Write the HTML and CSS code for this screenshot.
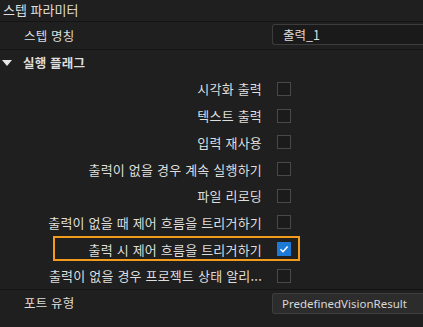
FILE: index.html
```html
<!DOCTYPE html>
<html lang="ko">
<head>
<meta charset="utf-8">
<title>스텝 파라미터</title>
<link rel="stylesheet" href="styles.css">
</head>
<body>
<div class="panel">
	<div class="title">스텝 파라미터</div>
	<div class="field">
		<span class="field_label">스텝 명칭</span>
		<div class="text_box">출력_1</div>
	</div>
	<div class="group_head">
		<span class="arrow"></span>
		<span class="group_label">실행 플래그</span>
	</div>
	<div class="flags">
		<div class="flag"><span class="flag_label">시각화 출력</span><span class="check"></span></div>
		<div class="flag"><span class="flag_label">텍스트 출력</span><span class="check"></span></div>
		<div class="flag"><span class="flag_label">입력 재사용</span><span class="check"></span></div>
		<div class="flag"><span class="flag_label">출력이 없을 경우 계속 실행하기</span><span class="check"></span></div>
		<div class="flag"><span class="flag_label">파일 리로딩</span><span class="check"></span></div>
		<div class="flag"><span class="flag_label">출력이 없을 때 제어 흐름을 트리거하기</span><span class="check"></span></div>
		<div class="flag flag_marked"><span class="flag_label">출력 시 제어 흐름을 트리거하기</span><span class="check checked">
			<svg width="14" height="14" viewBox="0 0 14 14"><path d="M3.5 7.3 L6 9.7 L10.6 4.4" fill="none" stroke="#fff" stroke-width="1.5"/></svg>
		</span></div>
		<div class="flag"><span class="flag_label">출력이 없을 경우 프로젝트 상태 알리...</span><span class="check"></span></div>
	</div>
	<div class="field field_port">
		<span class="field_label">포트 유형</span>
		<div class="drop_box">PredefinedVisionResult</div>
	</div>
</div>
</body>
</html>
```

FILE: styles.css
```css
body {
	margin: 0;
	background-color: #1f1f1f;
	color: #dedede;
	font-family: "Noto Sans CJK KR", "Noto Sans", sans-serif;
	font-size: 12px;
	overflow: hidden;
}

.panel {
	width: 423px;
	height: 327px;
}

.title {
	height: 21px;
	line-height: 20px;
	padding-left: 3px;
	font-size: 13px;
	border-bottom: 1px solid #141414;
}

.field {
	display: flex;
	align-items: center;
	height: 27px;
	border-bottom: 1px solid #141414;
}

.field_label {
	width: 248px;
	padding-left: 24px;
	font-size: 12.5px;
	letter-spacing: 0.2px;
}

.text_box {
	flex: 1;
	height: 19px;
	line-height: 19px;
	margin-top: -2px;
	padding-left: 10px;
	background-color: #1a1a1a;
	border: 1px solid #3c3c3c;
	border-right: none;
	border-radius: 3px 0 0 3px;
	font-size: 12.5px;
}

.group_head {
	display: flex;
	align-items: center;
	height: 25.6px;
}

.arrow {
	width: 0;
	height: 0;
	margin-left: 2px;
	margin-right: 11px;
	border-left: 5.5px solid transparent;
	border-right: 5.5px solid transparent;
	border-top: 6px solid #e8e8e8;
}

.group_label {
	font-size: 12.5px;
	font-weight: bold;
	letter-spacing: 0.2px;
}

.flag {
	position: relative;
	display: grid;
	grid-template-columns: 262px 14px;
	column-gap: 15px;
	align-items: center;
	height: 26.7px;
}

.flag_label {
	text-align: right;
	white-space: nowrap;
	font-size: 13px;
	letter-spacing: 0.2px;
}

.check {
	width: 12px;
	height: 12px;
	background-color: #1b1b1b;
	border: 1px solid #484848;
}

.checked {
	width: 14px;
	height: 14px;
	border: none;
	background-color: #1c7ad6;
}

.checked svg {
	display: block;
}

/* orange highlight around the marked flag */
.flag_marked::after {
	content: "";
	position: absolute;
	left: 53px;
	width: 243px;
	top: 0;
	height: 21px;
	border: 2px solid #f29b1d;
}

.field_port {
	height: 25px;
	border-bottom: none;
	border-top: 1px solid #141414;
}

.drop_box {
	flex: 1;
	height: 19px;
	line-height: 19px;
	margin-top: 1px;
	padding-left: 9px;
	background-color: #2c2c2c;
	border: 1px solid #3e3e3e;
	border-right: none;
	border-radius: 3px 0 0 3px;
	font-family: "Noto Sans", sans-serif;
	font-size: 11.5px;
	color: #d8d8d8;
}
```
